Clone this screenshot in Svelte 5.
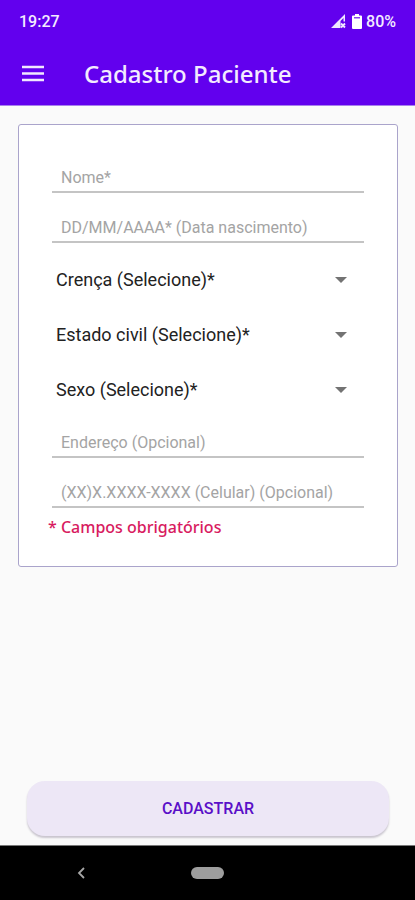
<script>
  const beliefs = ['Católica', 'Evangélica', 'Espírita', 'Outra'];
  const civilStates = ['Solteiro(a)', 'Casado(a)', 'Divorciado(a)', 'Viúvo(a)'];
  const sexes = ['Feminino', 'Masculino'];

  const topFields = [
    { id: 'nome', hint: 'Nome*' },
    { id: 'nascimento', hint: 'DD/MM/AAAA* (Data nascimento)' }
  ];
  const choices = [
    { id: 'crenca', hint: 'Crença (Selecione)*', options: beliefs },
    { id: 'civil', hint: 'Estado civil (Selecione)*', options: civilStates },
    { id: 'sexo', hint: 'Sexo (Selecione)*', options: sexes }
  ];
  const bottomFields = [
    { id: 'endereco', hint: 'Endereço (Opcional)' },
    { id: 'celular', hint: '(XX)X.XXXX-XXXX (Celular) (Opcional)' }
  ];
</script>

<div class="screen">
  <header>
    <div class="status">
      <span>19:27</span>
      <div class="indicators">
        <svg width="15" height="15" viewBox="0 0 15 15" aria-hidden="true">
          <path d="M14 0v7.500h-1.500V4L9.500 7v7H0z" fill="#efe6ff" />
          <path d="M10 9.500l4 4M14 9.500l-4 4" stroke="#efe6ff" stroke-width="1.800" />
        </svg>
        <svg width="10" height="15" viewBox="0 0 10 15" aria-hidden="true">
          <path d="M3 0h4v1.500h2q1 0 1 1V14q0 1-1 1H1q-1 0-1-1V2.500q0-1 1-1h2z" fill="#fff" />
          <path d="M2 3h6v1.500H2z" fill="#6200ee" opacity=".75" />
        </svg>
        <span>80%</span>
      </div>
    </div>
    <div class="toolbar">
      <button class="menu" type="button" aria-label="Menu">
        <svg width="22" height="17" viewBox="0 0 22 17" aria-hidden="true">
          <path d="M0 2h22M0 8.500h22M0 15h22" stroke="#f1e8ff" stroke-width="2.400" />
        </svg>
      </button>
      <h1>Cadastro Paciente</h1>
    </div>
  </header>

  <main>
    <form id="cadastro">
      {#each topFields as field}
        <input class="field" id={field.id} type="text" placeholder={field.hint} aria-label={field.hint} />
      {/each}
      <div class="choices">
        {#each choices as choice}
          <div class="choice">
            <select id={choice.id} aria-label={choice.hint}>
              <option value="">{choice.hint}</option>
              {#each choice.options as option}
                <option>{option}</option>
              {/each}
            </select>
            <svg width="12" height="6" viewBox="0 0 12 6" aria-hidden="true">
              <path d="M0 0h12L6 6z" fill="#737373" />
            </svg>
          </div>
        {/each}
      </div>
      {#each bottomFields as field}
        <input class="field" id={field.id} type="text" placeholder={field.hint} aria-label={field.hint} />
      {/each}
      <p class="required">* Campos obrigatórios</p>
    </form>
    <button class="submit" type="submit" form="cadastro">CADASTRAR</button>
  </main>

  <nav>
    <button class="back" type="button" aria-label="Voltar">
      <svg width="8" height="12" viewBox="0 0 8 12" aria-hidden="true">
        <path d="M7 1L2 6l5 5" fill="none" stroke="#a6a6a6" stroke-width="1.800" />
      </svg>
    </button>
    <button class="home" type="button" aria-label="Início"></button>
    <span></span>
  </nav>
</div>

<style>
  :global(body) {
    margin: 0;
    background: #fafafa;
  }
  .screen {
    display: flex;
    flex-direction: column;
    min-height: 100vh;
    background: #fafafa;
    font-family: Roboto, sans-serif;
  }
  button {
    border: 0;
    padding: 0;
    background: none;
    font-family: inherit;
  }
  header {
    background: #6200ee;
    color: #f3ebff;
    border-bottom: 1px solid #a880ec;
  }
  .status {
    display: flex;
    align-items: center;
    justify-content: space-between;
    height: 42px;
    padding: 0 19px;
    font-size: 16px;
    font-weight: 500;
  }
  .indicators {
    display: flex;
    align-items: center;
    gap: 6px;
  }
  .indicators span {
    margin-left: -2px;
  }
  .toolbar {
    display: flex;
    align-items: center;
    height: 63px;
    padding: 0 22px;
    gap: 40px;
  }
  .menu svg,
  .back svg {
    display: block;
  }
  h1 {
    margin: 0;
    font-family: "Noto Sans", sans-serif;
    font-size: 24px;
    line-height: 32px;
    font-weight: 500;
  }
  main {
    flex: 1;
    display: flex;
    flex-direction: column;
    padding: 18px 17px 9px 18px;
  }
  form {
    display: flex;
    flex-direction: column;
    gap: 8px;
    padding: 26px 33px 28px;
    border: 1px solid #aaa4cb;
    border-radius: 3px;
    background: #fff;
  }
  .field {
    box-sizing: border-box;
    width: 100%;
    height: 42px;
    padding: 12px 9px 0;
    border: 0;
    border-bottom: 2px solid #c4c4c4;
    border-radius: 0;
    background: none;
    color: #222;
    font-family: inherit;
    font-size: 16px;
    outline: none;
  }
  .field::placeholder {
    color: #a4a4a4;
    opacity: 1;
  }
  .choices {
    display: flex;
    flex-direction: column;
    margin: 1px 0 -9px;
  }
  .choice {
    display: grid;
    align-items: center;
  }
  .choice > * {
    grid-area: 1 / 1;
  }
  .choice svg {
    justify-self: end;
    margin-right: 17px;
    pointer-events: none;
  }
  select {
    appearance: none;
    width: 100%;
    height: 55px;
    padding: 0 40px 0 4px;
    border: 0;
    background: none;
    color: #222;
    font-family: inherit;
    font-size: 18px;
    outline: none;
  }
  .required {
    margin: 0 -4px;
    color: #d81b60;
    font-family: "Noto Sans", sans-serif;
    font-size: 16px;
    line-height: 22px;
    font-weight: 500;
  }
  .submit {
    height: 55px;
    margin: auto 9px 0;
    border-radius: 18px;
    background: #ede7f6;
    box-shadow: 0 2px 2px #c9c5ce;
    color: #5a0fc8;
    font-size: 16px;
    font-weight: 500;
  }
  nav {
    display: grid;
    grid-template-columns: 1fr 33px 1fr;
    align-items: center;
    height: 54px;
    border-top: 1px solid #777;
    background: #000;
  }
  .back {
    justify-self: start;
    margin-left: 77px;
  }
  .home {
    height: 12px;
    border-radius: 6px;
    background: #9e9e9e;
  }
</style>
